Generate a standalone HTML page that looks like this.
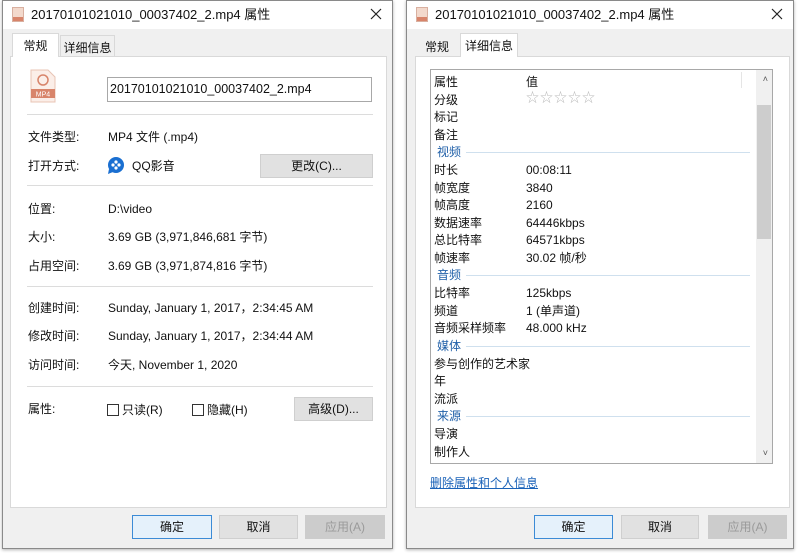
<!DOCTYPE html>
<html><head><meta charset="utf-8"><style>
*{margin:0;padding:0;box-sizing:border-box}
body{width:800px;height:553px;background:#fff;position:relative;overflow:hidden;font-family:"Liberation Sans","Noto Sans CJK SC",sans-serif;font-size:12px;line-height:16px;color:#111}
.win{position:absolute;top:0;height:549px;background:#f0f0f0;border:1px solid #8a8a8a;box-shadow:0 1px 3px rgba(0,0,0,.3)}
.title{position:absolute;left:0;right:0;top:0;height:28px;background:#fff}
.title .t{position:absolute;left:28px;top:6px;font-size:13px;white-space:nowrap}
.title svg{position:absolute;right:10px;top:7px}
.ficon{position:absolute;left:9px;top:6px;width:12px;height:15px;background:#f3d9cc;border:1px solid #d9b0a0}
.ficon:after{content:"";position:absolute;left:0;right:0;bottom:0;height:4px;background:#d8846a}
.tab{position:absolute;top:34px;height:22px;padding:4px 0 0;font-size:12px;white-space:nowrap;text-align:center}
.tab.on{background:#fff;border:1px solid #d9d9d9;border-bottom:none;top:32px;height:24px;z-index:2}
.panel{position:absolute;background:#fff;border:1px solid #d9d9d9;top:55px;height:452px}
.a{position:absolute;white-space:nowrap}
.sep{position:absolute;height:1px;background:#dcdcdc}
.btn{position:absolute;height:24px;background:#e1e1e1;border:1px solid #cfcfcf;text-align:center;line-height:22px}
.btn.def{border:1px solid #3c8bd6;background:#e5f1fb}
.btn.dis{color:#9a9a9a;background:#ccc;border-color:#ccc}
.cb{display:inline-block;width:12px;height:12px;border:1px solid #333;vertical-align:-2px;margin-right:3px}
.hd{position:absolute;color:#1f5fa8;left:6px}
.hl{position:absolute;height:1px;background:#cfe0ee;right:22px}
</style></head><body>

<div class="win" style="left:2px;width:391px">
 <div class="title"><div class="ficon"></div><div class="t">20170101021010_00037402_2.mp4 属性</div><svg width="12" height="12"><path d="M1 1L11 11M11 1L1 11" stroke="#222" stroke-width="1.2"/></svg></div>
 <div class="tab on" style="left:9px;width:47px">常规</div>
 <div class="tab" style="left:57px;width:55px;background:#f0f0f0;border:1px solid #d9d9d9;border-bottom:none">详细信息</div>
 <div class="panel" style="left:7px;width:377px">
  <svg class="a" style="left:19px;top:12px" width="26" height="34"><path d="M1 1h17l7 7v25H1z" fill="#fbeee8" stroke="#e8c4b5"/><circle cx="13" cy="11" r="5" fill="none" stroke="#d8846a" stroke-width="1.5"/><rect x="1" y="20" width="24" height="9" fill="#d8846a"/><text x="13" y="27.5" font-size="7" fill="#fff" text-anchor="middle" font-family="Liberation Sans">MP4</text></svg>
  <div class="a" style="left:96px;top:20px;width:265px;height:25px;border:1px solid #a8a8a8;padding:3px 2px;font-size:12.5px">20170101021010_00037402_2.mp4</div>
  <div class="sep" style="left:16px;width:346px;top:57px"></div>
  <div class="a" style="left:17px;top:72px">文件类型:</div><div class="a" style="left:97px;top:72px">MP4 文件 (.mp4)</div>
  <div class="a" style="left:17px;top:101px">打开方式:</div>
  <svg class="a" style="left:96px;top:99px" width="18" height="19"><circle cx="9" cy="9" r="8" fill="#1a6fd1"/><path d="M2 13l-1 5 5-2z" fill="#1a6fd1"/><circle cx="9" cy="6" r="1.6" fill="#fff"/><circle cx="6" cy="9" r="1.6" fill="#fff"/><circle cx="12" cy="9" r="1.6" fill="#fff"/><circle cx="9" cy="12" r="1.6" fill="#fff"/></svg>
  <div class="a" style="left:121px;top:101px">QQ影音</div>
  <div class="btn" style="left:249px;top:97px;width:113px">更改(C)...</div>
  <div class="sep" style="left:16px;width:346px;top:128px"></div>
  <div class="a" style="left:17px;top:144px">位置:</div><div class="a" style="left:97px;top:144px">D:\video</div>
  <div class="a" style="left:17px;top:172px">大小:</div><div class="a" style="left:97px;top:172px">3.69 GB (3,971,846,681 字节)</div>
  <div class="a" style="left:17px;top:201px">占用空间:</div><div class="a" style="left:97px;top:201px">3.69 GB (3,971,874,816 字节)</div>
  <div class="sep" style="left:16px;width:346px;top:229px"></div>
  <div class="a" style="left:17px;top:243px">创建时间:</div><div class="a" style="left:97px;top:243px">Sunday, January 1, 2017，2:34:45 AM</div>
  <div class="a" style="left:17px;top:271px">修改时间:</div><div class="a" style="left:97px;top:271px">Sunday, January 1, 2017，2:34:44 AM</div>
  <div class="a" style="left:17px;top:300px">访问时间:</div><div class="a" style="left:97px;top:300px">今天, November 1, 2020</div>
  <div class="sep" style="left:16px;width:346px;top:329px"></div>
  <div class="a" style="left:17px;top:344px">属性:</div>
  <div class="a" style="left:96px;top:345px"><span class="cb"></span>只读(R)</div>
  <div class="a" style="left:181px;top:345px"><span class="cb"></span>隐藏(H)</div>
  <div class="btn" style="left:283px;top:340px;width:79px">高级(D)...</div>
 </div>
 <div class="btn def" style="left:129px;top:514px;width:80px">确定</div>
 <div class="btn" style="left:216px;top:514px;width:79px">取消</div>
 <div class="btn dis" style="left:302px;top:514px;width:80px">应用(A)</div>
</div>

<div class="win" style="left:406px;width:388px">
 <div class="title"><div class="ficon"></div><div class="t">20170101021010_00037402_2.mp4 属性</div><svg width="12" height="12"><path d="M1 1L11 11M11 1L1 11" stroke="#222" stroke-width="1.2"/></svg></div>
 <div class="tab" style="left:10px;width:40px">常规</div>
 <div class="tab on" style="left:53px;width:58px">详细信息</div>
 <div class="panel" style="left:8px;width:375px">
  <div class="a" style="left:14px;top:12px;width:343px;height:395px;border:1px solid #a8a8a8;overflow:hidden">
   <div style="position:absolute;right:0;top:0;width:16px;height:100%;background:#f0f0f0"></div>
   <div style="position:absolute;right:1px;top:35px;width:14px;height:134px;background:#cdcdcd"></div>
   <div class="a" style="right:4px;top:1px;font-size:9px;color:#555">˄</div>
   <div class="a" style="right:4px;bottom:2px;font-size:9px;color:#555">˅</div>
   <div style="position:absolute;left:310px;top:2px;width:1px;height:16px;background:#e5e5e5"></div>
   <div class="a" style="left:3px;top:4px">属性</div><div class="a" style="left:95px;top:4px">值</div>
   <div class="a" style="left:3px;top:22px">分级</div><div class="a" style="left:95px;top:20px;color:#bbb;font-size:13px;letter-spacing:1px">☆☆☆☆☆</div>
   <div class="a" style="left:3px;top:39px">标记</div>
   <div class="a" style="left:3px;top:57px">备注</div>
   <div class="hd" style="top:74px">视频</div><div class="hl" style="left:35px;top:82px"></div>
   <div class="a" style="left:3px;top:92px">时长</div><div class="a" style="left:95px;top:92px">00:08:11</div>
   <div class="a" style="left:3px;top:110px">帧宽度</div><div class="a" style="left:95px;top:110px">3840</div>
   <div class="a" style="left:3px;top:127px">帧高度</div><div class="a" style="left:95px;top:127px">2160</div>
   <div class="a" style="left:3px;top:145px">数据速率</div><div class="a" style="left:95px;top:145px">64446kbps</div>
   <div class="a" style="left:3px;top:162px">总比特率</div><div class="a" style="left:95px;top:162px">64571kbps</div>
   <div class="a" style="left:3px;top:180px">帧速率</div><div class="a" style="left:95px;top:180px">30.02 帧/秒</div>
   <div class="hd" style="top:197px">音频</div><div class="hl" style="left:35px;top:205px"></div>
   <div class="a" style="left:3px;top:215px">比特率</div><div class="a" style="left:95px;top:215px">125kbps</div>
   <div class="a" style="left:3px;top:233px">频道</div><div class="a" style="left:95px;top:233px">1 (单声道)</div>
   <div class="a" style="left:3px;top:250px">音频采样频率</div><div class="a" style="left:95px;top:250px">48.000 kHz</div>
   <div class="hd" style="top:268px">媒体</div><div class="hl" style="left:35px;top:276px"></div>
   <div class="a" style="left:3px;top:286px">参与创作的艺术家</div>
   <div class="a" style="left:3px;top:303px">年</div>
   <div class="a" style="left:3px;top:321px">流派</div>
   <div class="hd" style="top:338px">来源</div><div class="hl" style="left:35px;top:346px"></div>
   <div class="a" style="left:3px;top:356px">导演</div>
   <div class="a" style="left:3px;top:374px">制作人</div>
  </div>
  <div class="a" style="left:14px;top:418px;color:#1a62b8;text-decoration:underline">删除属性和个人信息</div>
 </div>
 <div class="btn def" style="left:127px;top:514px;width:79px">确定</div>
 <div class="btn" style="left:214px;top:514px;width:78px">取消</div>
 <div class="btn dis" style="left:301px;top:514px;width:79px">应用(A)</div>
</div>
</body></html>
